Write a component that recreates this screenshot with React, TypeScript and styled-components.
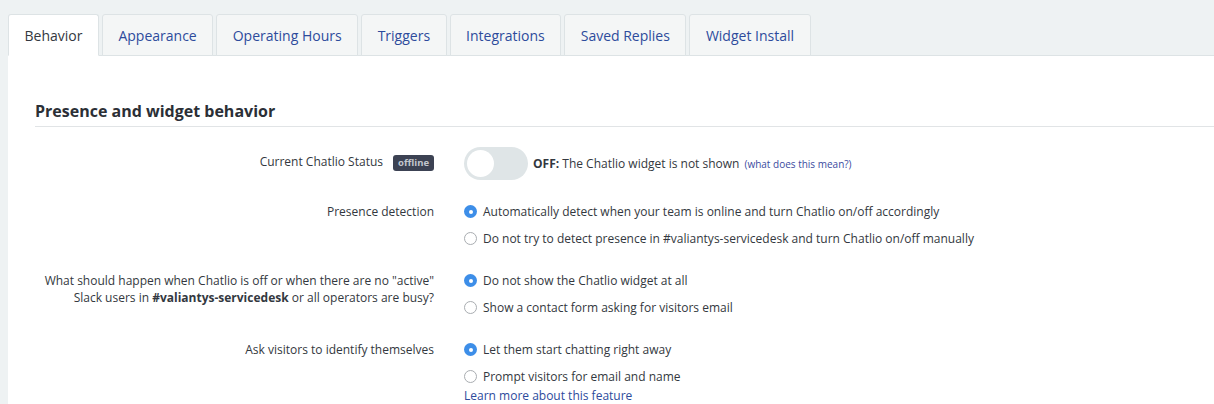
import React, { useState } from 'react';
import styled, { createGlobalStyle } from 'styled-components';

const GlobalStyle = createGlobalStyle`
  html, body {
    margin: 0;
    padding: 0;
    background: #eef2f3;
    font-family: 'Open Sans', 'Liberation Sans', sans-serif;
    color: #333840;
  }
`;

const Page = styled.div`
  display: flex;
  flex-direction: column;
  min-height: 100vh;
  padding-left: 8px;
  background: #eef2f3;
`;

const TabBar = styled.div`
  display: flex;
  gap: 3px;
  padding-top: 14px;
  border-bottom: 1px solid #dde3e5;
`;

const Tab = styled.button<{ $active?: boolean }>`
  height: 42px;
  padding: 0 15.5px;
  margin-bottom: -1px;
  font-family: inherit;
  font-size: 14px;
  color: ${p => (p.$active ? '#333840' : '#2d4b9c')};
  background: ${p => (p.$active ? '#fff' : '#f4f6f6')};
  border: 1px solid #dde3e5;
  border-bottom-color: ${p => (p.$active ? '#fff' : '#dde3e5')};
  border-radius: 3px 3px 0 0;
  cursor: pointer;
`;

const Panel = styled.div`
  flex: 1;
  background: #fff;
  padding: 45px 0 0 27px;
`;

const SectionTitle = styled.h2`
  margin: 0;
  padding-bottom: 5px;
  font-size: 16px;
  line-height: 20px;
  font-weight: 700;
  color: #2b2f36;
  border-bottom: 1px solid #e1e4e6;
`;

const Form = styled.div`
  display: flex;
  flex-direction: column;
  gap: 15px;
  padding-top: 20px;
`;

const Row = styled.div`
  display: grid;
  grid-template-columns: 399px 1fr;
  column-gap: 30px;
`;

const Label = styled.div<{ $pad?: number }>`
  text-align: right;
  font-size: 12px;
  line-height: 17px;
  padding-top: ${p => p.$pad ?? 5}px;
  color: #333840;

  b {
    font-weight: 700;
  }
`;

const Badge = styled.span`
  display: inline-block;
  margin-left: 7px;
  padding: 0 5px;
  height: 16px;
  line-height: 16px;
  font-size: 9.5px;
  font-weight: 700;
  color: #c3c7ce;
  background: #3c4253;
  border-radius: 3px;
  vertical-align: middle;
`;

const StatusLine = styled.div`
  display: flex;
  align-items: center;
  padding-bottom: 3px;
  font-size: 12px;
  color: #333840;
`;

const Switch = styled.button<{ $on: boolean }>`
  position: relative;
  width: 64px;
  height: 33px;
  margin-right: 5px;
  border: none;
  border-radius: 17px;
  background: ${p => (p.$on ? '#3d8ee8' : '#dfe5e7')};
  cursor: pointer;
  padding: 0;

  &::after {
    content: '';
    position: absolute;
    top: 3px;
    left: ${p => (p.$on ? '34px' : '3px')};
    width: 27px;
    height: 27px;
    border-radius: 50%;
    background: #fff;
  }
`;

const SmallLink = styled.a`
  margin-left: 5px;
  font-size: 10px;
  color: #3b4ba0;
  text-decoration: none;
`;

const Options = styled.div`
  display: flex;
  flex-direction: column;
`;

const Option = styled.label`
  display: flex;
  align-items: center;
  gap: 6px;
  height: 27px;
  font-size: 12px;
  color: #333840;
  cursor: pointer;
`;

const RadioDot = styled.span<{ $checked: boolean }>`
  box-sizing: border-box;
  width: 13px;
  height: 13px;
  border-radius: 50%;
  flex: none;
  background: ${p => (p.$checked ? '#3d8ee8' : '#fff')};
  border: ${p => (p.$checked ? 'none' : '1px solid #a9adb1')};
  display: flex;
  align-items: center;
  justify-content: center;

  &::after {
    content: '';
    width: 4px;
    height: 4px;
    border-radius: 50%;
    background: #fff;
    display: ${p => (p.$checked ? 'block' : 'none')};
  }
`;

const FeatureLink = styled.a`
  font-size: 12px;
  line-height: 12px;
  color: #2d4b9c;
  text-decoration: none;
`;

const tabs = ['Behavior', 'Appearance', 'Operating Hours', 'Triggers', 'Integrations', 'Saved Replies', 'Widget Install'];

type RadioGroupProps = {
  options: string[];
  value: number;
  onChange: (i: number) => void;
};

const RadioGroup: React.FC<RadioGroupProps> = ({ options, value, onChange }) => (
  <>
    {options.map((o, i) => (
      <Option key={o} onClick={() => onChange(i)}>
        <RadioDot $checked={value === i} />
        {o}
      </Option>
    ))}
  </>
);

export default function App() {
  const [active, setActive] = useState(0);
  const [on, setOn] = useState(false);
  const [presence, setPresence] = useState(0);
  const [offline, setOffline] = useState(0);
  const [identify, setIdentify] = useState(0);

  return (
    <Page>
      <GlobalStyle />
      <TabBar>
        {tabs.map((t, i) => (
          <Tab key={t} $active={active === i} onClick={() => setActive(i)}>
            {t}
          </Tab>
        ))}
      </TabBar>
      <Panel>
        <SectionTitle>Presence and widget behavior</SectionTitle>
        <Form>
          <Row>
            <Label $pad={6}>
              Current Chatlio Status <Badge>offline</Badge>
            </Label>
            <StatusLine>
              <Switch $on={on} onClick={() => setOn(v => !v)} aria-label="Toggle Chatlio" />
              <b>OFF:</b>&nbsp;The Chatlio widget is not shown
              <SmallLink href="#">(what does this mean?)</SmallLink>
            </StatusLine>
          </Row>
          <Row>
            <Label>Presence detection</Label>
            <Options>
              <RadioGroup
                value={presence}
                onChange={setPresence}
                options={[
                  'Automatically detect when your team is online and turn Chatlio on/off accordingly',
                  'Do not try to detect presence in #valiantys-servicedesk and turn Chatlio on/off manually',
                ]}
              />
            </Options>
          </Row>
          <Row>
            <Label>
              What should happen when Chatlio is off or when there are no "active"
              <br />
              Slack users in <b>#valiantys-servicedesk</b> or all operators are busy?
            </Label>
            <Options>
              <RadioGroup
                value={offline}
                onChange={setOffline}
                options={['Do not show the Chatlio widget at all', 'Show a contact form asking for visitors email']}
              />
            </Options>
          </Row>
          <Row>
            <Label>Ask visitors to identify themselves</Label>
            <Options>
              <RadioGroup
                value={identify}
                onChange={setIdentify}
                options={['Let them start chatting right away', 'Prompt visitors for email and name']}
              />
              <FeatureLink href="#">Learn more about this feature</FeatureLink>
            </Options>
          </Row>
        </Form>
      </Panel>
    </Page>
  );
}
